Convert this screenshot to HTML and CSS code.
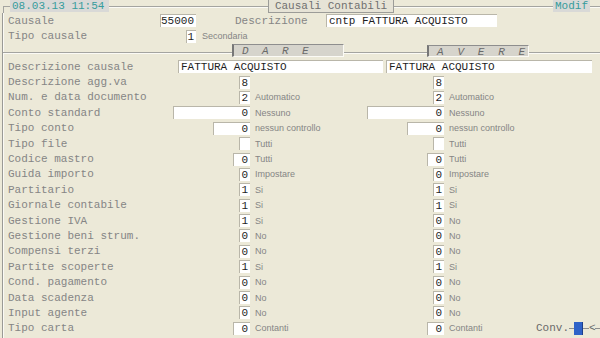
FILE: index.html
```html
<!DOCTYPE html>
<html>
<head>
<meta charset="utf-8">
<link rel="stylesheet" href="styles.css">
</head>
<body>
<div class="top">
  <div class="corner"></div>
  <div class="date">08.03.13 11:54</div>
  <div class="line"></div>
  <div class="title">Causali Contabili</div>
  <div class="line"></div>
  <div class="modif">Modif</div>
  <div class="line end"></div>
</div>
<div class="frame">
  <div class="hrow1">
    <span class="hl">Causale</span>
    <span class="fld w36">55000</span>
    <span class="hdesc">Descrizione</span>
    <span class="fld w171 left">cntp FATTURA ACQUISTO</span>
  </div>
  <div class="hrow2">
    <span class="hl2">Tipo causale</span>
    <span class="fld w10">1</span>
    <span class="sub">Secondaria</span>
  </div>
  <div class="tabs">
    <div class="tline l1"></div>
    <div class="tab dare">D A R E</div>
    <div class="tline l2"></div>
    <div class="tab avere">A V E R E</div>
    <div class="tline l3"></div>
  </div>
  <div class="rows">
    <div class="row">
      <span class="lbl">Descrizione causale</span>
      <span class="fld dl left">FATTURA ACQUISTO</span>
      <span class="fld al left">FATTURA ACQUISTO</span>
    </div>
    <div class="row">
      <span class="lbl">Descrizione agg.va</span>
      <span class="fld c2 w11">8</span>
      <span class="fld c4 w11">8</span>
    </div>
    <div class="row">
      <span class="lbl">Num. e data documento</span>
      <span class="fld c2 w11">2</span><span class="sub c3">Automatico</span>
      <span class="fld c4 w11">2</span><span class="sub c5">Automatico</span>
    </div>
    <div class="row">
      <span class="lbl">Conto standard</span>
      <span class="fld c2 w77">0</span><span class="sub c3">Nessuno</span>
      <span class="fld c4 w77">0</span><span class="sub c5">Nessuno</span>
    </div>
    <div class="row">
      <span class="lbl">Tipo conto</span>
      <span class="fld c2 w37">0</span><span class="sub c3">nessun controllo</span>
      <span class="fld c4 w37">0</span><span class="sub c5">nessun controllo</span>
    </div>
    <div class="row">
      <span class="lbl">Tipo file</span>
      <span class="fld c2 w11"></span><span class="sub c3">Tutti</span>
      <span class="fld c4 w11"></span><span class="sub c5">Tutti</span>
    </div>
    <div class="row">
      <span class="lbl">Codice mastro</span>
      <span class="fld c2 w17">0</span><span class="sub c3">Tutti</span>
      <span class="fld c4 w17">0</span><span class="sub c5">Tutti</span>
    </div>
    <div class="row">
      <span class="lbl">Guida importo</span>
      <span class="fld c2 w11">0</span><span class="sub c3">Impostare</span>
      <span class="fld c4 w11">0</span><span class="sub c5">Impostare</span>
    </div>
    <div class="row">
      <span class="lbl">Partitario</span>
      <span class="fld c2 w11">1</span><span class="sub c3">Si</span>
      <span class="fld c4 w11">1</span><span class="sub c5">Si</span>
    </div>
    <div class="row">
      <span class="lbl">Giornale contabile</span>
      <span class="fld c2 w11">1</span><span class="sub c3">Si</span>
      <span class="fld c4 w11">1</span><span class="sub c5">Si</span>
    </div>
    <div class="row">
      <span class="lbl">Gestione IVA</span>
      <span class="fld c2 w11">1</span><span class="sub c3">Si</span>
      <span class="fld c4 w11">0</span><span class="sub c5">No</span>
    </div>
    <div class="row">
      <span class="lbl">Gestione beni strum.</span>
      <span class="fld c2 w11">0</span><span class="sub c3">No</span>
      <span class="fld c4 w11">0</span><span class="sub c5">No</span>
    </div>
    <div class="row">
      <span class="lbl">Compensi terzi</span>
      <span class="fld c2 w11">0</span><span class="sub c3">No</span>
      <span class="fld c4 w11">0</span><span class="sub c5">No</span>
    </div>
    <div class="row">
      <span class="lbl">Partite scoperte</span>
      <span class="fld c2 w11">1</span><span class="sub c3">Si</span>
      <span class="fld c4 w11">1</span><span class="sub c5">Si</span>
    </div>
    <div class="row">
      <span class="lbl">Cond. pagamento</span>
      <span class="fld c2 w11">0</span><span class="sub c3">No</span>
      <span class="fld c4 w11">0</span><span class="sub c5">No</span>
    </div>
    <div class="row">
      <span class="lbl">Data scadenza</span>
      <span class="fld c2 w11">0</span><span class="sub c3">No</span>
      <span class="fld c4 w11">0</span><span class="sub c5">No</span>
    </div>
    <div class="row">
      <span class="lbl">Input agente</span>
      <span class="fld c2 w11">0</span><span class="sub c3">No</span>
      <span class="fld c4 w11">0</span><span class="sub c5">No</span>
    </div>
    <div class="row">
      <span class="lbl">Tipo carta</span>
      <span class="fld c2 w17">0</span><span class="sub c3">Contanti</span>
      <span class="fld c4 w17">0</span>
      <span class="c5 last">
        <span class="sub">Contanti</span>
        <span class="conv">
          <span class="convtxt">Conv.</span>
          <span class="dash d5"></span>
          <span class="cursor"></span>
          <span class="dash d6"></span>
          <span class="lt">&lt;</span>
          <span class="dash d5"></span>
        </span>
      </span>
    </div>
  </div>
</div>
</body>
</html>
```
FILE: styles.css
```css
html, body {
  margin: 0;
  padding: 0;
}
body {
  width: 600px;
  height: 338px;
  overflow: hidden;
  background: #ECE9D8;
  font-family: "Liberation Mono", "DejaVu Sans Mono", monospace;
  font-size: 11px;
  color: #858585;
}
.top {
  display: flex;
  height: 13px;
}
.corner {
  margin-left: 3px;
  margin-top: 6px;
  width: 7px;
  height: 7px;
  border-top: 1px solid #a4a4a0;
  border-left: 1px solid #a4a4a0;
  box-sizing: border-box;
}
.date {
  width: 99px;
  height: 12px;
  line-height: 12px;
  background: #d9d9d7;
  color: #379c9c;
  padding-left: 2px;
  box-sizing: border-box;
}
.line {
  flex: 1;
  height: 1px;
  margin-top: 6px;
  background: #a4a4a0;
  border-bottom: 1px solid #fbfaf5;
}
.line.end {
  flex: 0 0 10px;
}
.title {
  width: 126px;
  height: 13px;
  line-height: 12px;
  box-sizing: border-box;
  background: #e6e3d6;
  border: 1px solid #9c9c98;
  border-top: none;
  text-align: center;
  color: #707070;
}
.modif {
  width: 37px;
  height: 12px;
  line-height: 12px;
  background: #d9d9d7;
  color: #379c9c;
  padding-left: 2px;
  box-sizing: border-box;
}
.frame {
  margin-left: 2px;
  border-left: 1px solid #9a9a96;
  box-shadow: inset 1px 0 0 #fbfaf5;
  padding-left: 5px;
  height: 325px;
  box-sizing: border-box;
}
.hrow1 {
  display: flex;
  align-items: center;
  height: 15px;
}
.hrow2 {
  display: flex;
  align-items: center;
  height: 16px;
}
.hl {
  width: 152px;
}
.hl2 {
  width: 178px;
}
.hdesc {
  margin-left: 39px;
  width: 91px;
}
.fld {
  display: block;
  height: 13px;
  line-height: 13px;
  background: #fff;
  border-left: 1px solid #b9b6a9;
  border-top: 1px solid #b9b6a9;
  box-sizing: border-box;
  text-align: right;
  padding-right: 2px;
  color: #1e1e1e;
  white-space: pre;
  overflow: hidden;
}
.fld.left {
  text-align: left;
  padding-left: 2px;
  padding-right: 0;
}
.w10 { width: 10px; }
.w11 { width: 11px; }
.w17 { width: 17px; }
.w36 { width: 36px; }
.w37 { width: 37px; }
.w77 { width: 77px; }
.w171 { width: 171px; }
.sub {
  font-family: "Liberation Sans", Arial, sans-serif;
  font-size: 9px;
  color: #858585;
  padding-left: 5px;
  white-space: nowrap;
}
.hrow2 .sub {
  padding-left: 6px;
}
.tabs {
  display: flex;
  height: 15px;
  margin-left: -5px;
}
.tline {
  height: 1px;
  margin-top: 8px;
  background: #a4a4a0;
  border-bottom: 1px solid #fbfaf5;
}
.l1 { width: 229px; }
.l2 { width: 83px; }
.l3 { flex: 1; }
.tab {
  height: 13px;
  line-height: 12px;
  box-sizing: border-box;
  background: #d6d4cc;
  border-left: 2px solid #777;
  border-top: 1px solid #8e8e8e;
  border-right: 1px solid #fbfaf5;
  border-bottom: 1px solid #fbfaf5;
  font-style: italic;
  color: #6a6a6a;
  padding-left: 8px;
  white-space: pre;
}
.dare {
  width: 112px;
  letter-spacing: 3.4px;
}
.avere {
  width: 102px;
  margin-top: 1px;
  height: 12px;
  letter-spacing: 3.6px;
}
.rows {
  display: flex;
  flex-direction: column;
}
.row {
  display: grid;
  grid-template-columns: 162px 80px 114px 80px 1fr;
  height: 15.4px;
  align-items: center;
}
.lbl {
  grid-column: 1;
  white-space: nowrap;
}
.c2 { grid-column: 2; justify-self: end; }
.c3 { grid-column: 3; }
.c4 { grid-column: 4; justify-self: end; }
.c5 { grid-column: 5; }
.dl {
  grid-column: 2 / 4;
  justify-self: start;
  margin-left: 8px;
  width: 205px;
}
.al {
  grid-column: 4 / 6;
  justify-self: start;
  margin-left: 22px;
  width: 206px;
}
.last {
  display: flex;
  align-items: center;
}
.conv {
  margin-left: auto;
  display: flex;
  align-items: center;
  color: #6a6a6a;
}
.convtxt {
  width: 33px;
}
.dash {
  height: 1px;
  background: #8e8e8e;
}
.d5 { width: 5px; }
.d6 { width: 6px; }
.cursor {
  width: 9px;
  height: 13px;
  background: #2f62c8;
  border-right: 1px solid #1d3f8a;
  box-sizing: border-box;
}
.lt {
  width: 6px;
  line-height: 11px;
}
```
